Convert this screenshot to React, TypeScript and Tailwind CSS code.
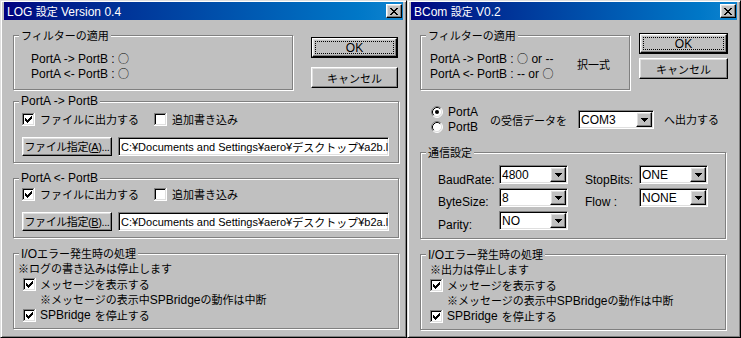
import React from 'react';

// runs of Japanese text get the CJK face at a slightly smaller size so widths match the dialog font
const CJK = /([\u3000-\u30ff\u4e00-\u9fff\uff01-\uff9f※○]+)/;

const T: React.FC<{ s: string }> = ({ s }) => (
  <>
    {s.split(CJK).map((p, i) =>
      i % 2 ? (
        <span key={i} className="text-[11px] font-['Noto_Sans_CJK_JP',sans-serif]">
          {p}
        </span>
      ) : (
        <React.Fragment key={i}>{p}</React.Fragment>
      )
    )}
  </>
);

const raised =
  'border border-t-white border-l-white border-r-black border-b-black shadow-[inset_-1px_-1px_0_#808080,inset_1px_1px_0_#dfdfdf]';
const sunken =
  'border border-t-[#808080] border-l-[#808080] border-r-white border-b-white shadow-[inset_1px_1px_0_#000,inset_-1px_-1px_0_#dfdfdf]';

const Check: React.FC<{ on?: boolean }> = ({ on }) => (
  <svg width="13" height="13" shapeRendering="crispEdges" className="shrink-0">
    <rect width="13" height="13" fill="#fff" />
    <path d="M0 0h12v1H1v11H0z" fill="#808080" />
    <path d="M1 1h10v1H2v9H1z" fill="#000" />
    <path d="M12 0h1v13H0v-1h12z" fill="#fff" />
    <path d="M11 1h1v11H1v-1h10z" fill="#dfdfdf" />
    {on && (
      <path
        d="M3 5h1v3H3zM4 6h1v3H4zM5 7h1v3H5zM6 6h1v3H6zM7 5h1v3H7zM8 4h1v3H8zM9 3h1v3H9z"
        fill="#000"
      />
    )}
  </svg>
);

const Radio: React.FC<{ on?: boolean }> = ({ on }) => (
  <svg width="12" height="12" className="shrink-0">
    <circle cx="6" cy="6" r="5" fill="#fff" />
    <path d="M9.89 2.11A5.5 5.5 0 0 0 2.11 9.89" stroke="#808080" fill="none" />
    <path d="M2.11 9.89A5.5 5.5 0 0 0 9.89 2.11" stroke="#fff" fill="none" />
    <path d="M9.18 2.82A4.5 4.5 0 0 0 2.82 9.18" stroke="#000" fill="none" />
    <path d="M2.82 9.18A4.5 4.5 0 0 0 9.18 2.82" stroke="#dfdfdf" fill="none" />
    {on && <circle cx="6" cy="6" r="2" fill="#000" />}
  </svg>
);

const Group: React.FC<{ label: string; className: string; children?: React.ReactNode }> = ({
  label,
  className,
  children,
}) => (
  <div className={`relative border border-[#808080] shadow-[inset_1px_1px_0_#fff,1px_1px_0_#fff] ${className}`}>
    <span className="absolute -top-[8px] left-[5px] bg-[#c0c0c0] px-[2px] leading-[14px] whitespace-nowrap">
      <T s={label} />
    </span>
    {children}
  </div>
);

const Button: React.FC<{ className: string; children: React.ReactNode }> = ({ className, children }) => (
  <div className={`${raised} bg-[#c0c0c0] flex items-center justify-center whitespace-nowrap ${className}`}>
    {children}
  </div>
);

const DefaultButton: React.FC<{ className: string; children: React.ReactNode }> = ({ className, children }) => (
  <div className={`border border-black flex ${className}`}>
    <div className={`${raised} flex-1 flex p-[2px]`}>
      <div className="flex-1 border border-dotted border-black flex items-center justify-center">{children}</div>
    </div>
  </div>
);

const Combo: React.FC<{ value: string; className: string }> = ({ value, className }) => (
  <div className={`${sunken} bg-white flex p-[1px] ${className}`}>
    <span className="flex-1 pl-[1px] self-center leading-[14px]">{value}</span>
    <span className={`${raised} w-[16px] bg-[#c0c0c0] flex items-center justify-center`}>
      <svg width="7" height="4" shapeRendering="crispEdges">
        <path d="M0 0h7v1H6v1H5v1H4v1H3V3H2V2H1V1H0z" fill="#000" />
      </svg>
    </span>
  </div>
);

const CloseBox: React.FC = () => (
  <div className={`${raised} bg-[#c0c0c0] w-[16px] h-[14px] flex items-center justify-center`}>
    <svg width="8" height="7" shapeRendering="crispEdges">
      <path
        d="M0 0h2v1H0zM6 0h2v1H6zM1 1h2v1H1zM5 1h2v1H5zM2 2h4v1H2zM3 3h2v1H3zM2 4h4v1H2zM1 5h2v1H1zM5 5h2v1H5zM0 6h2v1H0zM6 6h2v1H6z"
        fill="#000"
      />
    </svg>
  </div>
);

const Window: React.FC<{ title: string; className: string; children: React.ReactNode }> = ({
  title,
  className,
  children,
}) => (
  <div
    className={`flex flex-col h-[338px] bg-[#c0c0c0] border border-t-[#dfdfdf] border-l-[#dfdfdf] border-r-black border-b-black shadow-[inset_1px_1px_0_#fff,inset_-1px_-1px_0_#808080] pt-[1px] px-[3px] ${className}`}
  >
    <div className="h-[18px] shrink-0 flex items-center bg-linear-to-r from-[#000080] to-[#1084d0] text-white pl-[3px] pr-[1px]">
      <span className="flex-1 whitespace-nowrap">
        <T s={title} />
      </span>
      <CloseBox />
    </div>
    {children}
  </div>
);

const FileGroup: React.FC<{
  label: string;
  btn: string;
  path: string;
  className: string;
  rowGap: string;
}> = ({ label, btn, path, className, rowGap }) => (
  <Group label={label} className={`ml-[9px] w-[386px] ${className}`}>
    <div className={`flex items-center pl-[8px] ${rowGap}`}>
      <div className="w-[132px] flex items-center gap-[5px]">
        <Check on />
        <T s="ファイルに出力する" />
      </div>
      <div className="flex items-center gap-[5px]">
        <Check />
        <T s="追加書き込み" />
      </div>
    </div>
    <div className="flex items-center mt-[11px] pl-[8px] gap-[6px]">
      <Button className="w-[90px] h-[19px]">
        <span className="text-[11px] tracking-[-0.4px]">
          <T s="ファイル指定(" />
          <span className="underline">{btn}</span>
          )...
        </span>
      </Button>
      <div
        className={`${sunken} bg-white w-[271px] h-[19px] flex items-center pl-[2px] overflow-hidden whitespace-nowrap text-[11px]`}
      >
        <T s={path} />
      </div>
    </div>
  </Group>
);

const IoGroup: React.FC<{ note: string; notePad: string; boxPad: string; className: string }> = ({
  note,
  notePad,
  boxPad,
  className,
}) => (
  <Group label="I/Oエラー発生時の処理" className={`ml-[9px] h-[76px] ${className}`}>
    <div className="flex flex-col pt-[7px] leading-[15px]">
      <div className={notePad}>
        <T s={note} />
      </div>
      <div className={`flex items-center gap-[4px] ${boxPad}`}>
        <Check on />
        <T s="メッセージを表示する" />
      </div>
      <div className={boxPad}>
        <div className="pl-[17px]">
          <T s="※メッセージの表示中SPBridgeの動作は中断" />
        </div>
      </div>
      <div className={`flex items-center gap-[4px] ${boxPad}`}>
        <Check on />
        <T s="SPBridgeを停止する" />
      </div>
    </div>
  </Group>
);

const LogDialog: React.FC = () => (
  <Window title="LOG 設定 Version 0.4" className="w-[407px]">
    <div className="flex items-start mt-[15px]">
      <Group label="フィルターの適用" className="ml-[9px] w-[280px] h-[55px]">
        <div className="pl-[17px] pt-[15px] leading-[14px]">
          <div>
            <T s="PortA -> PortB : ○" />
          </div>
          <div>
            <T s="PortA <- PortB : ○" />
          </div>
        </div>
      </Group>
      <div className="ml-[18px] mt-[2px] flex flex-col gap-[9px]">
        <DefaultButton className="w-[87px] h-[21px]">OK</DefaultButton>
        <Button className="w-[87px] h-[21px]">
          <T s="キャンセル" />
        </Button>
      </div>
    </div>
    <FileGroup
      label="PortA -> PortB"
      btn="A"
      path="C:¥Documents and Settings¥aero¥デスクトップ¥a2b.log"
      className="mt-[11px] h-[62px]"
      rowGap="mt-[10px]"
    />
    <FileGroup
      label="PortA <- PortB"
      btn="B"
      path="C:¥Documents and Settings¥aero¥デスクトップ¥b2a.log"
      className="mt-[15px] h-[60px]"
      rowGap="mt-[8px]"
    />
    <IoGroup
      note="※ログの書き込みは停止します"
      notePad="pl-[4px]"
      boxPad="pl-[9px]"
      className="mt-[15px] w-[386px]"
    />
  </Window>
);

const BcomDialog: React.FC = () => (
  <Window title="BCom 設定 V0.2" className="w-[334px]">
    <div className="flex items-start mt-[13px]">
      <Group label="フィルターの適用" className="ml-[9px] mt-[2px] w-[210px] h-[55px]">
        <div className="flex pl-[9px] pt-[15px] leading-[14px]">
          <div>
            <div>
              <T s="PortA -> PortB : ○ or --" />
            </div>
            <div>
              <T s="PortA <- PortB : -- or ○" />
            </div>
          </div>
          <div className="ml-auto mr-[19px] mt-[6px]">
            <T s="択一式" />
          </div>
        </div>
      </Group>
      <div className="ml-[9px] flex flex-col gap-[4px]">
        <DefaultButton className="w-[89px] h-[21px]">OK</DefaultButton>
        <Button className="w-[89px] h-[21px]">
          <T s="キャンセル" />
        </Button>
      </div>
    </div>

    <div className="flex items-center mt-[15px] ml-[20px]">
      <div className="w-[59px] flex flex-col gap-[1px]">
        <div className="flex items-center gap-[5px] h-[14px]">
          <Radio on />
          PortA
        </div>
        <div className="flex items-center gap-[5px] h-[14px]">
          <Radio />
          PortB
        </div>
      </div>
      <T s="の受信データを" />
      <Combo value="COM3" className="ml-[11px] w-[76px] h-[19px]" />
      <div className="ml-[10px]">
        <T s="へ出力する" />
      </div>
    </div>

    <Group label="通信設定" className="ml-[9px] mt-[18px] w-[306px] h-[87px]">
      <div className="flex flex-col pt-[12px] pl-[17px] gap-[4px]">
        <div className="flex items-start h-[19px]">
          <div className="w-[61px] mt-[8px]">BaudRate:</div>
          <Combo value="4800" className="w-[69px] h-[19px]" />
          <div className="ml-[17px] w-[54px] mt-[8px]">StopBits:</div>
          <Combo value="ONE" className="w-[69px] h-[19px]" />
        </div>
        <div className="flex items-start h-[19px]">
          <div className="w-[61px] mt-[7px]">ByteSize:</div>
          <Combo value="8" className="w-[69px] h-[19px]" />
          <div className="ml-[17px] w-[54px] mt-[7px]">Flow :</div>
          <Combo value="NONE" className="w-[69px] h-[19px]" />
        </div>
        <div className="flex items-start h-[19px]">
          <div className="w-[61px] mt-[7px]">Parity:</div>
          <Combo value="NO" className="w-[69px] h-[19px]" />
        </div>
      </div>
    </Group>

    <IoGroup note="※出力は停止します" notePad="pl-[9px]" boxPad="pl-[9px]" className="mt-[15px] w-[306px]" />
  </Window>
);

export default function App() {
  return (
    <div className="flex w-[741px] h-[338px] overflow-hidden font-['Liberation_Sans','Noto_Sans_CJK_JP',sans-serif] text-[12px] leading-[14px] text-black">
      <LogDialog />
      <BcomDialog />
    </div>
  );
}
